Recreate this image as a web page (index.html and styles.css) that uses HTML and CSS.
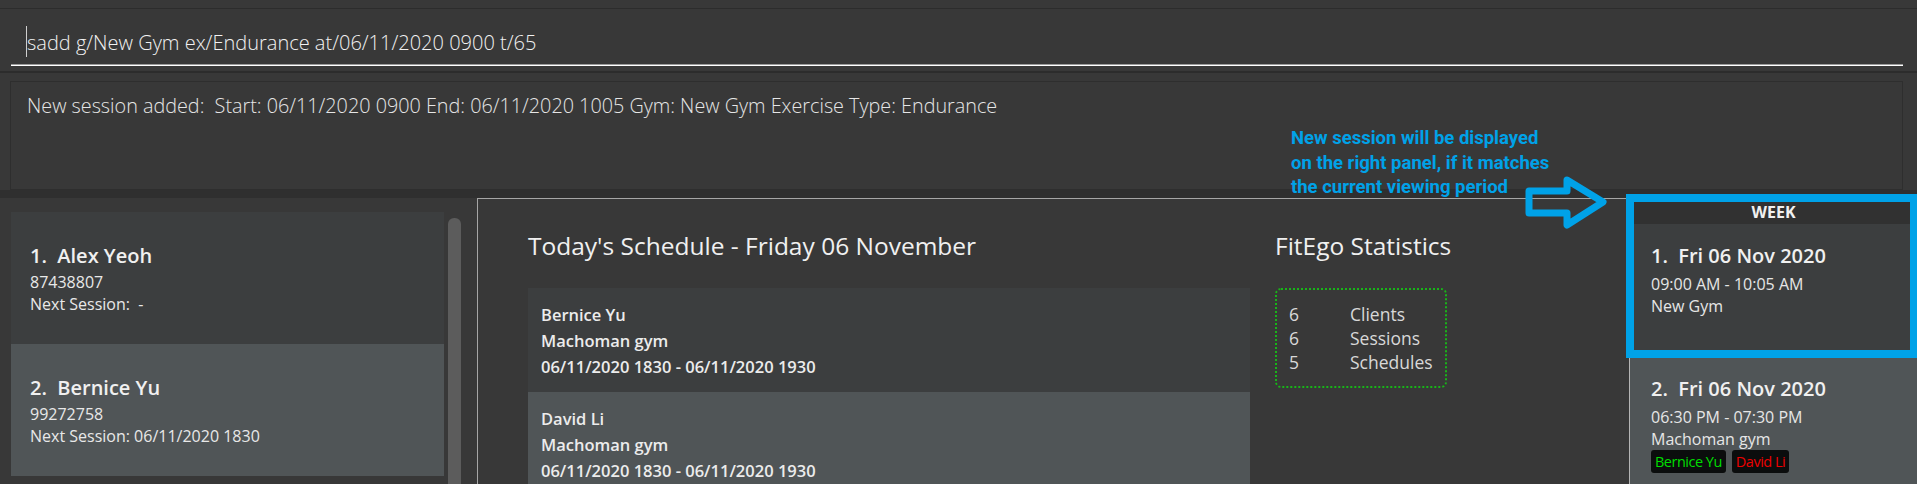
FILE: index.html
```html
<!DOCTYPE html>
<html>
<head>
<meta charset="utf-8">
<link rel="stylesheet" href="styles.css">
</head>
<body>
<div class="app">
  <div class="topstrip"></div>
  <div class="command">
    <div class="command-field"><span class="caret"></span>sadd g/New Gym ex/Endurance at/06/11/2020 0900 t/65</div>
  </div>
  <div class="sep"></div>
  <div class="result-wrap">
    <div class="result-box">New session added:&nbsp; Start: 06/11/2020 0900 End: 06/11/2020 1005 Gym: New Gym Exercise Type: Endurance</div>
  </div>
  <div class="divider"></div>
  <div class="main">
    <div class="left">
      <div class="list">
        <div class="card even">
          <div class="card-name">1.&nbsp; Alex Yeoh</div>
          <div class="card-line">87438807</div>
          <div class="card-line">Next Session:&nbsp; -</div>
        </div>
        <div class="card odd">
          <div class="card-name">2.&nbsp; Bernice Yu</div>
          <div class="card-line">99272758</div>
          <div class="card-line">Next Session: 06/11/2020 1830</div>
        </div>
      </div>
      <div class="scrollbar"><div class="thumb"></div></div>
    </div>
    <div class="center">
      <div class="schedule">
        <div class="title">Today's Schedule - Friday 06 November</div>
        <div class="sched-card even">
          <div class="sched-line">Bernice Yu</div>
          <div class="sched-line">Machoman gym</div>
          <div class="sched-line">06/11/2020 1830 - 06/11/2020 1930</div>
        </div>
        <div class="sched-card odd">
          <div class="sched-line">David Li</div>
          <div class="sched-line">Machoman gym</div>
          <div class="sched-line">06/11/2020 1830 - 06/11/2020 1930</div>
        </div>
      </div>
      <div class="stats">
        <div class="title">FitEgo Statistics</div>
        <div class="stats-box">
          <span class="stat-num">6</span><span class="stat-label">Clients</span>
          <span class="stat-num">6</span><span class="stat-label">Sessions</span>
          <span class="stat-num">5</span><span class="stat-label">Schedules</span>
        </div>
      </div>
    </div>
    <div class="right">
      <div class="week-header">WEEK</div>
      <div class="session-card even first">
        <div class="session-name">1.&nbsp; Fri 06 Nov 2020</div>
        <div class="session-line">09:00 AM - 10:05 AM</div>
        <div class="session-line">New Gym</div>
      </div>
      <div class="session-card odd">
        <div class="session-name">2.&nbsp; Fri 06 Nov 2020</div>
        <div class="session-line">06:30 PM - 07:30 PM</div>
        <div class="session-line">Machoman gym</div>
        <div class="tags">
          <span class="tag tag-green">Bernice Yu</span>
          <span class="tag tag-red">David Li</span>
        </div>
      </div>
    </div>
  </div>

  <div class="annotation">New session will be displayed<br>on the right panel, if it matches<br>the current viewing period</div>
  <svg class="arrow" width="100" height="66" viewBox="0 0 100 66">
    <polygon points="9,21 47,21 47,10 83,32 47,55 47,43 9,43" fill="none" stroke="#00a2e8" stroke-width="7" stroke-linejoin="round"/>
  </svg>
  <div class="highlight"></div>
</div>
</body>
</html>
```

FILE: styles.css
```css
html, body {
  margin: 0;
  padding: 0;
}
body {
  background: #383838;
  width: 1917px;
  height: 484px;
  overflow: hidden;
  font-family: "Segoe UI", "Open Sans", "Noto Sans", sans-serif;
  color: #eeeeee;
}
.app {
  position: relative;
  width: 1917px;
  height: 484px;
  display: flex;
  flex-direction: column;
  overflow: hidden;
}
.topstrip {
  height: 8px;
  border-bottom: 1px solid #2c2c2c;
  flex: none;
}
.command {
  height: 62px;
  flex: none;
  padding: 12px 14px 0 11px;
  box-sizing: border-box;
}
.command-field {
  position: relative;
  height: 44px;
  line-height: 44px;
  padding-left: 16px;
  font-size: 20px;
  font-weight: 300;
  color: #f2f2f2;
  border-bottom: 1px solid #ffffff;
  box-shadow: inset 0 -1px 0 #9a9a9a;
  white-space: nowrap;
}
.caret {
  position: absolute;
  left: 15px;
  top: 5px;
  width: 1px;
  height: 31px;
  background: #cfcfcf;
}
.sep {
  height: 2px;
  flex: none;
  background: #2c2c2c;
}
.result-wrap {
  height: 117px;
  flex: none;
  padding: 8px 14px 0 10px;
  box-sizing: border-box;
}
.result-box {
  height: 109px;
  box-sizing: border-box;
  border: 1px solid #2e2e2e;
  padding: 11px 0 0 16px;
  font-size: 19.8px;
  font-weight: 300;
  line-height: 26px;
  color: #e6e6e6;
  white-space: nowrap;
}
.divider {
  height: 8px;
  flex: none;
  background: #2f2f2f;
}
.main {
  flex: 1;
  display: flex;
  min-height: 0;
  overflow: hidden;
}
.left {
  width: 477px;
  flex: none;
  display: flex;
  padding: 14px 0 0 11px;
  box-sizing: border-box;
}
.list {
  width: 433px;
  flex: none;
}
.card {
  height: 132px;
  box-sizing: border-box;
  padding: 31px 0 0 19px;
}
.even { background: #3c3e3f; }
.odd { background: #505557; }
.card-name {
  font-size: 20px;
  font-weight: 600;
  line-height: 26px;
  color: #f0f0f0;
  margin-bottom: 2px;
}
.card-line {
  font-size: 16px;
  line-height: 22px;
  color: #e8e8e8;
}
.scrollbar {
  width: 13px;
  margin-left: 4px;
  padding-top: 6px;
  display: flex;
  flex-direction: column;
}
.thumb {
  flex: 1;
  border-radius: 6px 6px 0 0;
  background: #5c5c5c;
}
.center {
  flex: 1;
  display: flex;
  border-top: 1px solid #a6a6a6;
  border-left: 1px solid #a6a6a6;
  min-width: 0;
}
.schedule {
  width: 722px;
  margin-left: 50px;
  flex: none;
}
.title {
  height: 89px;
  padding-top: 31px;
  box-sizing: border-box;
  font-size: 24.5px;
  line-height: 32px;
  color: #f0f0f0;
  white-space: nowrap;
}
.sched-card {
  height: 104px;
  box-sizing: border-box;
  padding: 14px 0 0 13px;
}
.sched-line {
  font-size: 16.5px;
  font-weight: 600;
  line-height: 26px;
  color: #ececec;
}
.stats {
  margin-left: 25px;
}
.stats-box {
  width: 172px;
  height: 100px;
  box-sizing: border-box;
  border: 2px dotted #18b418;
  border-radius: 6px;
  padding: 12px 0 0 12px;
  display: grid;
  grid-template-columns: 61px auto;
  grid-auto-rows: 24px;
  font-size: 17.5px;
  line-height: 24px;
  color: #d8d8d8;
}
.right {
  width: 288px;
  flex: none;
  border-left: 1px solid #b4b4b4;
  border-top: 1px solid #a6a6a6;
  box-sizing: border-box;
}
.week-header {
  height: 25px;
  background: #313131;
  text-align: center;
  font-size: 16px;
  font-weight: 700;
  line-height: 26px;
  color: #f0f0f0;
}
.session-card {
  box-sizing: border-box;
  padding: 19px 0 0 21px;
}
.session-card.first {
  height: 134px;
}
.session-card.odd {
  padding-top: 18px;
}
.session-name {
  font-size: 20px;
  font-weight: 600;
  line-height: 26px;
  color: #f0f0f0;
  margin-bottom: 4px;
}
.session-line {
  font-size: 16px;
  line-height: 22px;
  color: #e6e6e6;
}
.tags {
  display: flex;
  gap: 6px;
  padding-bottom: 20px;
}
.tag {
  height: 23px;
  line-height: 23px;
  padding: 0 4px;
  border-radius: 3px;
  background: #0b0d0d;
  font-size: 14.5px;
  letter-spacing: -0.5px;
}
.tag-green { color: #00dd00; }
.tag-red { color: #ee0000; }

.annotation {
  position: absolute;
  left: 1291px;
  top: 126px;
  font-family: "Roboto", "Liberation Sans", sans-serif;
  font-weight: 700;
  font-size: 18.5px;
  line-height: 24.5px;
  color: #00a2e8;
  white-space: nowrap;
}
.arrow {
  position: absolute;
  left: 1520px;
  top: 170px;
}
.highlight {
  position: absolute;
  left: 1626px;
  top: 194px;
  width: 292px;
  height: 164px;
  box-sizing: border-box;
  border: 8px solid #00a2e8;
}
```
